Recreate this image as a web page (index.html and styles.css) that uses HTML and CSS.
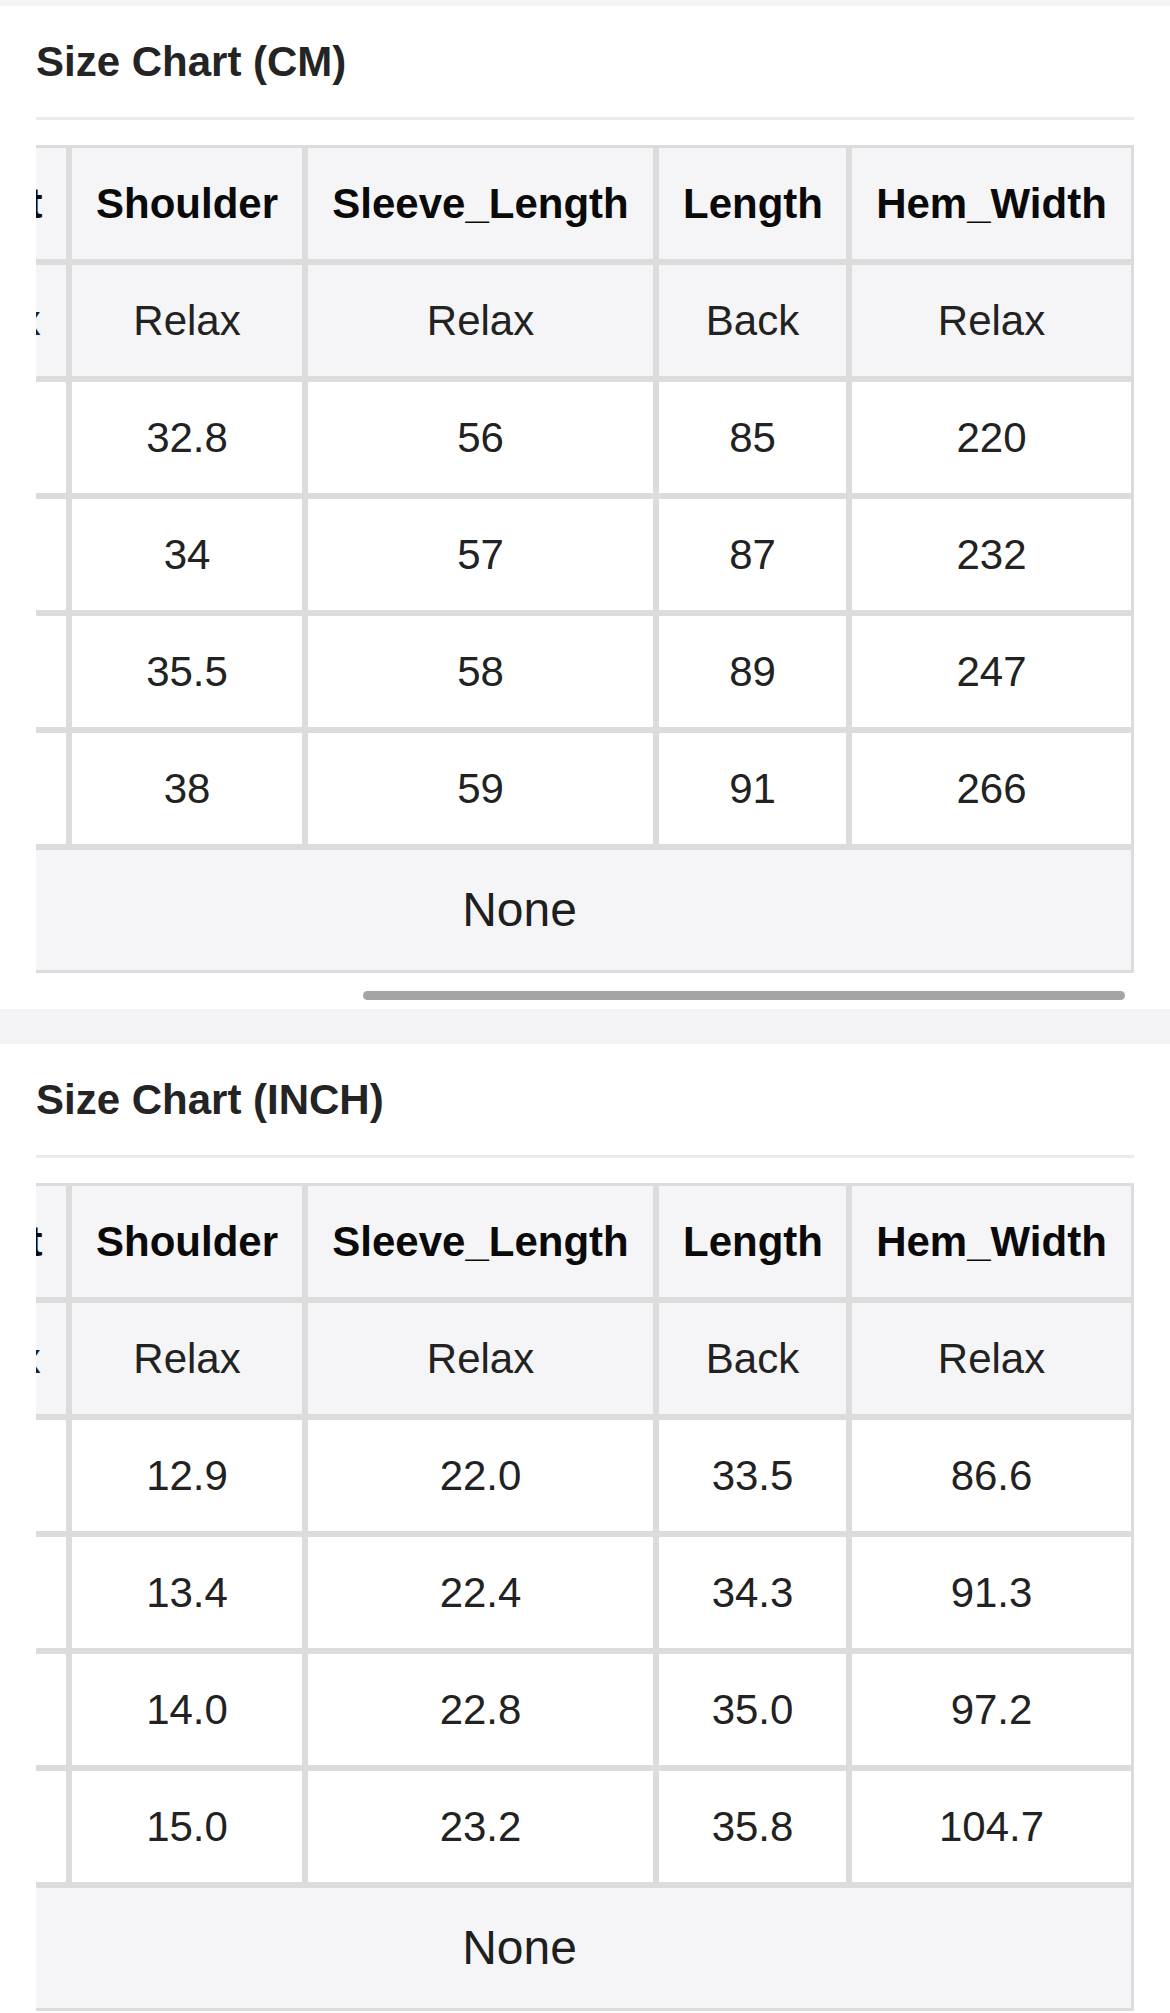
FILE: index.html
```html
<!DOCTYPE html>
<html lang="en">
<head>
<meta charset="utf-8">
<title>Size Chart</title>
<link rel="stylesheet" href="styles.css">
</head>
<body>
<div class="band band-top"></div>
<section class="chart">
  <h2 class="chart-title">Size Chart (CM)</h2>
  <div class="scroller">
    <table class="size-table">
      <colgroup>
        <col class="c0"><col class="c1"><col class="c2"><col class="c3"><col class="c4">
      </colgroup>
      <thead>
        <tr class="row-head"><th>Waist</th><th>Shoulder</th><th>Sleeve_Length</th><th>Length</th><th>Hem_Width</th></tr>
        <tr class="row-sub"><td>Relax</td><td>Relax</td><td>Relax</td><td>Back</td><td>Relax</td></tr>
      </thead>
      <tbody>
        <tr><td>66</td><td>32.8</td><td>56</td><td>85</td><td>220</td></tr>
        <tr><td>70</td><td>34</td><td>57</td><td>87</td><td>232</td></tr>
        <tr><td>74</td><td>35.5</td><td>58</td><td>89</td><td>247</td></tr>
        <tr><td>80</td><td>38</td><td>59</td><td>91</td><td>266</td></tr>
        <tr class="row-note"><td colspan="5">None</td></tr>
      </tbody>
    </table>
  </div>
  <div class="scrollbar"></div>
</section>
<div class="band band-gap"></div>
<section class="chart">
  <h2 class="chart-title">Size Chart (INCH)</h2>
  <div class="scroller">
    <table class="size-table">
      <colgroup>
        <col class="c0"><col class="c1"><col class="c2"><col class="c3"><col class="c4">
      </colgroup>
      <thead>
        <tr class="row-head"><th>Waist</th><th>Shoulder</th><th>Sleeve_Length</th><th>Length</th><th>Hem_Width</th></tr>
        <tr class="row-sub"><td>Relax</td><td>Relax</td><td>Relax</td><td>Back</td><td>Relax</td></tr>
      </thead>
      <tbody>
        <tr><td>26</td><td>12.9</td><td>22.0</td><td>33.5</td><td>86.6</td></tr>
        <tr><td>28</td><td>13.4</td><td>22.4</td><td>34.3</td><td>91.3</td></tr>
        <tr><td>29</td><td>14.0</td><td>22.8</td><td>35.0</td><td>97.2</td></tr>
        <tr><td>31</td><td>15.0</td><td>23.2</td><td>35.8</td><td>104.7</td></tr>
        <tr class="row-note"><td colspan="5">None</td></tr>
      </tbody>
    </table>
  </div>
  <div class="scrollbar"></div>
</section>
</body>
</html>
```

FILE: styles.css
```css
* { box-sizing: border-box; }

html, body {
  margin: 0;
  padding: 0;
  background: #ffffff;
  font-family: "Liberation Sans", Arial, Helvetica, sans-serif;
  color: #222222;
}

.band { background: #f4f4f6; }
.band-top { height: 6px; }
.band-gap { height: 35px; }

.chart {
  padding: 0 36px;
}

.chart-title {
  margin: 0;
  padding: 30px 0;
  font-size: 42px;
  line-height: 51px;
  font-weight: 700;
  color: #242424;
  border-bottom: 3px solid #ebebeb;
}

.scroller {
  margin-top: 25px;
  display: flex;
  justify-content: flex-end;
  overflow: hidden;
}

.size-table {
  flex-shrink: 0;
  width: 1229px;
  table-layout: fixed;
  border-collapse: separate;
  border-spacing: 0;
}

.c0 { width: 164px; }
.c1 { width: 236px; }
.c2 { width: 351px; }
.c3 { width: 193px; }
.c4 { width: 285px; }

.size-table th,
.size-table td {
  border: 3px solid #dcdcdc;
  padding: 24px;
  font-size: 42px;
  line-height: 63px;
  text-align: center;
  white-space: nowrap;
  background: #ffffff;
  color: #222222;
  font-weight: 400;
}

.size-table th {
  font-weight: 700;
  color: #0a0a0a;
}

.row-head th,
.row-sub td {
  background: #f5f5f7;
}

.row-note td {
  background: #f5f5f7;
  font-size: 48px;
  line-height: 72px;
  color: #1e1e1e;
}

.scrollbar {
  width: 762px;
  height: 9px;
  margin: 18px 9px 9px auto;
  border-radius: 5px;
  background: #a4a4a4;
}
```
